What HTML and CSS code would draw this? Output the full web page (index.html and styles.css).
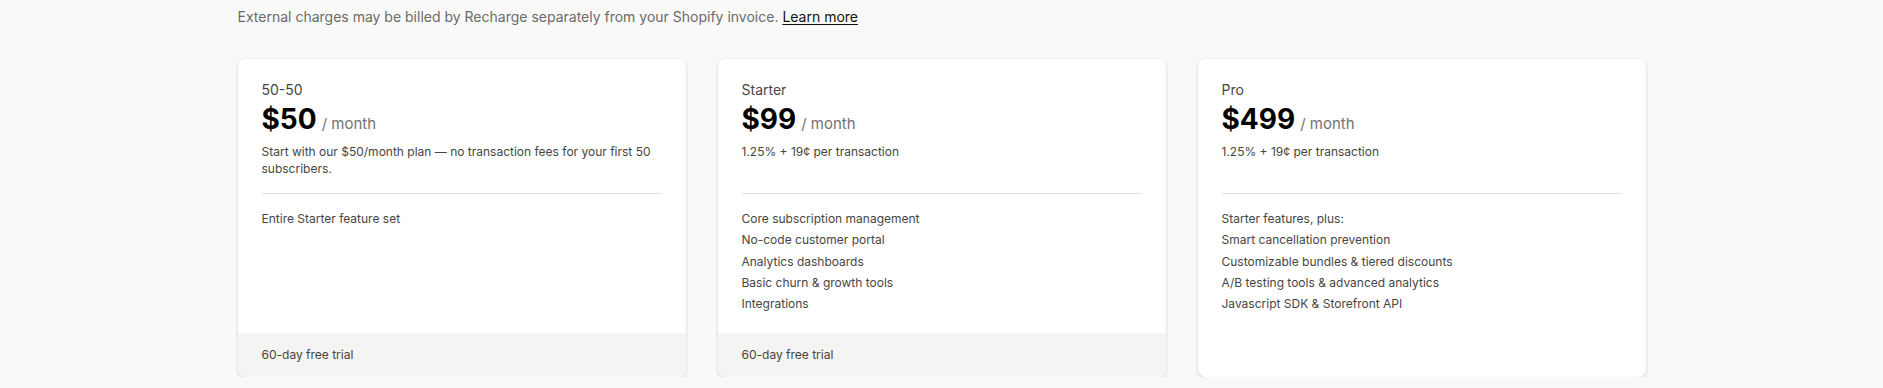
FILE: index.html
```html
<!DOCTYPE html>
<html lang="en">
<head>
<meta charset="utf-8">
<title>Plans</title>
<link rel="stylesheet" href="styles.css">
</head>
<body>
<main class="page">
  <p class="notice">External charges may be billed by Recharge separately from your Shopify invoice. <a href="#" class="notice-link">Learn more</a></p>
  <section class="plans">
    <article class="plan">
      <div class="plan-body">
        <header class="plan-head">
          <h3 class="plan-name">50-50</h3>
          <div class="plan-price"><span class="amount">$50</span><span class="period">/ month</span></div>
          <p class="plan-desc">Start with our $50/month plan — no transaction fees for your first 50 subscribers.</p>
        </header>
        <ul class="features">
          <li>Entire Starter feature set</li>
        </ul>
      </div>
      <footer class="plan-foot">60-day free trial</footer>
    </article>
    <article class="plan">
      <div class="plan-body">
        <header class="plan-head">
          <h3 class="plan-name">Starter</h3>
          <div class="plan-price"><span class="amount">$99</span><span class="period">/ month</span></div>
          <p class="plan-desc">1.25% + 19¢ per transaction</p>
        </header>
        <ul class="features">
          <li>Core subscription management</li>
          <li>No-code customer portal</li>
          <li>Analytics dashboards</li>
          <li>Basic churn &amp; growth tools</li>
          <li>Integrations</li>
        </ul>
      </div>
      <footer class="plan-foot">60-day free trial</footer>
    </article>
    <article class="plan">
      <div class="plan-body">
        <header class="plan-head">
          <h3 class="plan-name">Pro</h3>
          <div class="plan-price"><span class="amount">$499</span><span class="period">/ month</span></div>
          <p class="plan-desc">1.25% + 19¢ per transaction</p>
        </header>
        <ul class="features">
          <li>Starter features, plus:</li>
          <li>Smart cancellation prevention</li>
          <li>Customizable bundles &amp; tiered discounts</li>
          <li>A/B testing tools &amp; advanced analytics</li>
          <li>Javascript SDK &amp; Storefront API</li>
        </ul>
      </div>
    </article>
  </section>
</main>
</body>
</html>
```
FILE: styles.css
```css
* { box-sizing: border-box; }
html, body { margin: 0; padding: 0; }
body {
  background: #f9f9f8;
  font-family: Inter, "Noto Sans", sans-serif;
  color: #464644;
}
.page {
  max-width: 1408px;
  margin: 0 auto;
  padding-top: 7px;
}
.notice {
  margin: 0;
  font-size: 14px;
  line-height: 20px;
  color: #6b6b6b;
}
.notice-link {
  color: #111;
  text-decoration: underline;
  text-underline-offset: 2px;
}
.plans {
  margin-top: 32px;
  display: grid;
  grid-template-columns: repeat(3, 1fr);
  gap: 32px;
}
.plan {
  background: #fff;
  border-radius: 8px;
  box-shadow: 0 2px 4px rgba(0,0,0,0.13), 0 0 2px rgba(0,0,0,0.06);
  display: flex;
  flex-direction: column;
  height: 318px;
  overflow: hidden;
}
.plan-body {
  flex: 1;
  padding: 21px 24px 0;
}
.plan-head {
  border-bottom: 1px solid #e3e3e1;
  padding-bottom: 16px;
}
.plan-name {
  margin: 0;
  font-size: 14px;
  line-height: 20px;
  font-weight: 400;
  color: #464644;
}
.plan-price {
  display: flex;
  align-items: baseline;
  gap: 5px;
  line-height: 36px;
  margin-top: 1px;
}
.amount {
  font-size: 28px;
  font-weight: 700;
  color: #000;
}
.period {
  font-size: 15px;
  color: #727272;
}
.plan-desc {
  margin: 1px 0 0;
  font-size: 12px;
  line-height: 17px;
  min-height: 34px;
  color: #464644;
}
.features {
  list-style: none;
  margin: 0;
  padding: 14px 0 0;
  font-size: 12px;
  line-height: 21.3px;
  color: #464644;
}
.plan-foot {
  background: #f4f4f2;
  padding: 12px 24px;
  font-size: 12px;
  line-height: 20px;
  color: #464644;
}
```
